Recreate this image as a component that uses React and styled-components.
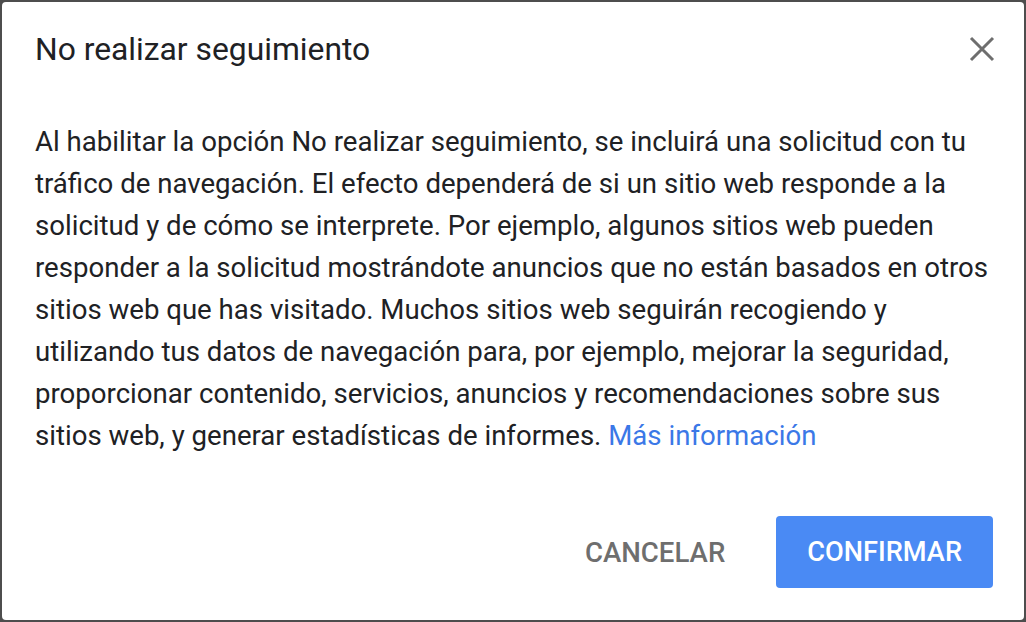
import styled, { createGlobalStyle } from "styled-components";

const GlobalStyle = createGlobalStyle`
  html, body {
    margin: 0;
    padding: 0;
    background: #4d4d4d;
    font-family: Roboto, "Liberation Sans", Arial, sans-serif;
  }
`;

const Backdrop = styled.div`
  height: 100vh;
  box-sizing: border-box;
  padding: 2px;
  display: flex;
`;

const Dialog = styled.div`
  flex: 1;
  background: #ffffff;
  border-radius: 4px;
  display: flex;
  flex-direction: column;
`;

const Header = styled.div`
  display: flex;
  align-items: center;
  justify-content: space-between;
  padding: 27px 22px 0 33px;
`;

const Title = styled.h1`
  margin: 0;
  font-size: 31.8px;
  line-height: 40px;
  font-weight: 400;
  color: #202124;
`;

const CloseButton = styled.button`
  width: 40px;
  height: 40px;
  border: none;
  background: transparent;
  padding: 0;
  display: flex;
  align-items: center;
  justify-content: center;
  cursor: pointer;
`;

const Body = styled.p`
  margin: 0;
  padding: 52px 33px 0 33px;
  font-size: 27.6px;
  line-height: 42px;
  color: #202124;
`;

const Link = styled.a`
  color: #3b78e7;
  text-decoration: none;
`;

const Footer = styled.div`
  margin-top: auto;
  display: flex;
  justify-content: flex-end;
  align-items: center;
  gap: 20px;
  padding: 0 31px 32px 0;
`;

const Button = styled.button`
  height: 72px;
  padding: 0 31px;
  border: none;
  border-radius: 4px;
  font-family: Roboto, "Liberation Sans", Arial, sans-serif;
  font-size: ${(props) => (props.primary ? "27.2px" : "27.6px")};
  font-weight: 500;
  cursor: pointer;
  background: ${(props) => (props.primary ? "#4a8af4" : "transparent")};
  color: ${(props) => (props.primary ? "#ffffff" : "#6e6e6e")};
`;

const CloseIcon = () => (
  <svg width="26" height="26" viewBox="0 0 26 26">
    <path d="M2 2 L24 24 M24 2 L2 24" stroke="#6e6e6e" strokeWidth="3" />
  </svg>
);

const App = () => {
  return (
    <>
      <GlobalStyle />
      <Backdrop>
        <Dialog>
          <Header>
            <Title>No realizar seguimiento</Title>
            <CloseButton aria-label="Cerrar">
              <CloseIcon />
            </CloseButton>
          </Header>
          <Body>
            Al habilitar la opción No realizar seguimiento, se incluirá una solicitud con tu
            tráfico de navegación. El efecto dependerá de si un sitio web responde a la
            solicitud y de cómo se interprete. Por ejemplo, algunos sitios web pueden
            responder a la solicitud mostrándote anuncios que no están basados en otros
            sitios web que has visitado. Muchos sitios web seguirán recogiendo y
            utilizando tus datos de navegación para, por ejemplo, mejorar la seguridad,
            proporcionar contenido, servicios, anuncios y recomendaciones sobre sus
            sitios web, y generar estadísticas de informes.{" "}
            <Link href="#">Más información</Link>
          </Body>
          <Footer>
            <Button>CANCELAR</Button>
            <Button primary>CONFIRMAR</Button>
          </Footer>
        </Dialog>
      </Backdrop>
    </>
  );
};

export default App;
